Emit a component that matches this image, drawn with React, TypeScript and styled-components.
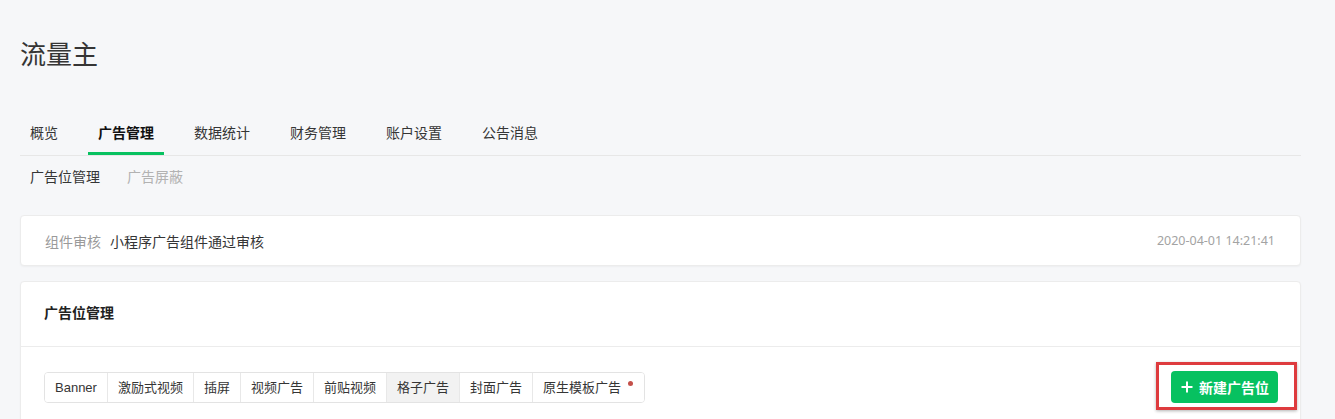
import React, {FC, useState} from 'react';
import styled, {createGlobalStyle} from 'styled-components';

const GlobalStyle = createGlobalStyle`
  body {
    margin: 0;
    background: #f6f7f9;
    font-family: "Noto Sans", "Noto Sans CJK SC", sans-serif;
    color: #353535;
  }
`;

const Page = styled.div`
  padding: 36px 34px 0 20px;
`;

const Title = styled.h1`
  margin: 0;
  font-size: 26px;
  font-weight: 400;
  line-height: 36px;
  color: #353535;
`;

const Tabs = styled.nav`
  display: flex;
  gap: 20px;
  margin-top: 50px;
  border-bottom: 1px solid #e7e7e7;
`;

const Tab = styled.div<{$active?: boolean}>`
  padding: 0 10px 8px;
  font-size: 14px;
  line-height: 22px;
  font-weight: ${p => (p.$active ? 700 : 400)};
  color: ${p => (p.$active ? '#111' : '#353535')};
  border-bottom: 3px solid ${p => (p.$active ? '#07c160' : 'transparent')};
  cursor: pointer;
`;

const SubTabs = styled.div`
  display: flex;
  gap: 27px;
  margin-top: 10px;
  padding-left: 10px;
`;

const SubTab = styled.div<{$active?: boolean}>`
  font-size: 14px;
  line-height: 22px;
  color: ${p => (p.$active ? '#353535' : '#b2b2b2')};
  cursor: pointer;
`;

const Card = styled.section`
  background: #fff;
  border: 1px solid #ececec;
  border-radius: 4px;
  box-shadow: 0 1px 2px rgba(0, 0, 0, 0.04);
`;

const NoticeCard = styled(Card)`
  margin-top: 27px;
  height: 51px;
  box-sizing: border-box;
  display: flex;
  align-items: center;
  padding: 0 25px 0 24px;
  font-size: 14px;
`;

const NoticeLabel = styled.span`
  color: #9a9a9a;
  margin-right: 9px;
`;

const NoticeText = styled.span`
  flex: 1;
  color: #353535;
`;

const NoticeTime = styled.span`
  color: #a3a3a3;
  font-size: 12.5px;
`;

const PanelCard = styled(Card)`
  margin-top: 15px;
  height: 160px;
`;

const PanelHeader = styled.div`
  height: 65px;
  box-sizing: border-box;
  display: flex;
  align-items: center;
  padding: 0 24px 5px 23px;
  border-bottom: 1px solid #ececec;
  font-size: 14px;
  font-weight: 700;
  color: #222;
`;

const PanelBody = styled.div`
  display: flex;
  align-items: center;
  justify-content: space-between;
  padding: 24px 22px 0 23px;
`;

const Segments = styled.div`
  display: flex;
  border: 1px solid #e3e3e3;
  border-radius: 4px;
  overflow: hidden;
`;

const Segment = styled.div<{$active?: boolean}>`
  padding: 0 10px;
  height: 29px;
  line-height: 29px;
  font-family: "Liberation Sans", "Noto Sans CJK SC", sans-serif;
  font-size: 13px;
  color: #353535;
  background: ${p => (p.$active ? '#f2f2f2' : '#fff')};
  border-left: 1px solid #e8e8e8;
  cursor: pointer;

  &:first-child {
    border-left: none;
  }
`;

const Dot = styled.span`
  display: inline-block;
  width: 5px;
  height: 5px;
  border-radius: 50%;
  background: #c4504a;
  margin-left: 7px;
  margin-right: 1px;
  vertical-align: 6px;
`;

const ButtonWrap = styled.div`
  position: relative;
`;

const Highlight = styled.div`
  position: absolute;
  top: -9px;
  left: -15px;
  right: -19px;
  bottom: -7px;
  border: 3px solid #de3b3e;
  box-shadow: 0 1px 3px rgba(0, 0, 0, 0.3);
  pointer-events: none;
`;

const PrimaryButton = styled.button`
  display: flex;
  align-items: center;
  gap: 6px;
  height: 32px;
  padding: 0 9px 0 10px;
  border: none;
  border-radius: 4px;
  background: #07c160;
  color: #fff;
  font-family: inherit;
  font-size: 14px;
  font-weight: 700;
  cursor: pointer;
`;

const tabs = ['概览', '广告管理', '数据统计', '财务管理', '账户设置', '公告消息'];
const segments = ['Banner', '激励式视频', '插屏', '视频广告', '前贴视频', '格子广告', '封面广告', '原生模板广告'];

const App: FC = () => {
  const [tab, setTab] = useState('广告管理');
  const [segment, setSegment] = useState('格子广告');

  return (
    <>
      <GlobalStyle />
      <Page>
        <Title>流量主</Title>

        <Tabs>
          {tabs.map(t => (
            <Tab key={t} $active={t === tab} onClick={() => setTab(t)}>
              {t}
            </Tab>
          ))}
        </Tabs>

        <SubTabs>
          <SubTab $active>广告位管理</SubTab>
          <SubTab>广告屏蔽</SubTab>
        </SubTabs>

        <NoticeCard>
          <NoticeLabel>组件审核</NoticeLabel>
          <NoticeText>小程序广告组件通过审核</NoticeText>
          <NoticeTime>2020-04-01 14:21:41</NoticeTime>
        </NoticeCard>

        <PanelCard>
          <PanelHeader>广告位管理</PanelHeader>
          <PanelBody>
            <Segments>
              {segments.map(s => (
                <Segment key={s} $active={s === segment} onClick={() => setSegment(s)}>
                  {s}
                  {s === '原生模板广告' && <Dot />}
                </Segment>
              ))}
            </Segments>
            <ButtonWrap>
              <PrimaryButton>
                <svg width="12" height="12" viewBox="0 0 12 12">
                  <path d="M6 0.5v11M0.5 6h11" stroke="#fff" strokeWidth="2" />
                </svg>
                新建广告位
              </PrimaryButton>
              <Highlight />
            </ButtonWrap>
          </PanelBody>
        </PanelCard>
      </Page>
    </>
  );
};

export default App;
